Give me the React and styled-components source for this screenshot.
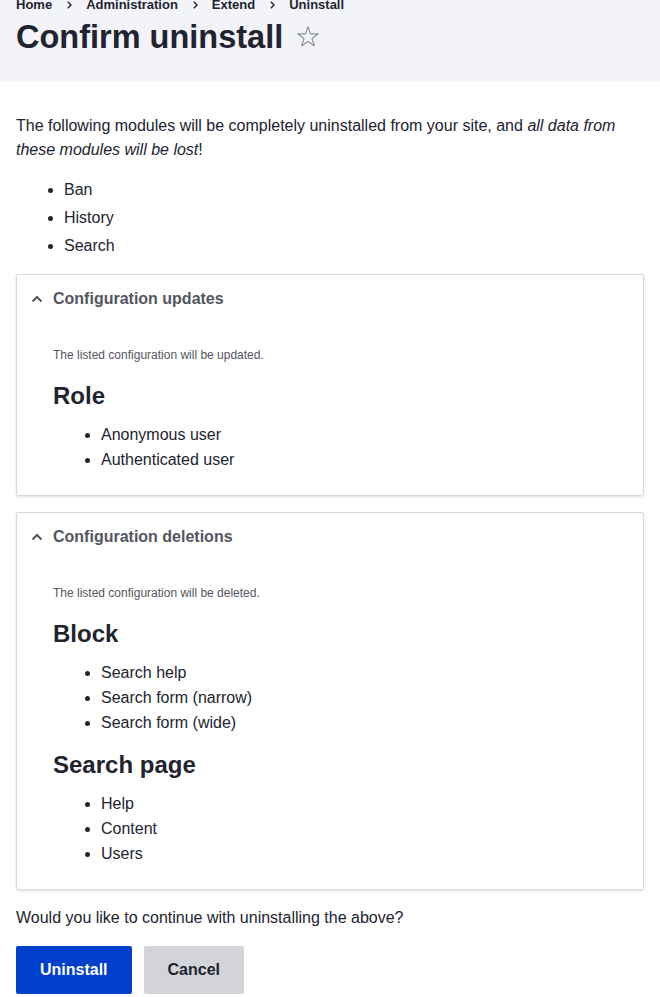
import React from 'react';
import styled, { createGlobalStyle } from 'styled-components';

const GlobalStyle = createGlobalStyle`
  html, body {
    margin: 0;
    padding: 0;
    background: #fff;
    color: #222330;
    font-family: "Liberation Sans", Arial, sans-serif;
    font-size: 16px;
  }
  * { box-sizing: border-box; }
`;

const Header = styled.header`
  background: #f3f4f9;
  margin-top: -5px;
  padding: 0 16px 24px;
`;

const Crumbs = styled.ol`
  display: flex;
  align-items: center;
  list-style: none;
  margin: 0;
  padding: 0;
  font-size: 13px;
  font-weight: bold;
  line-height: 20px;
`;

const Crumb = styled.li`
  display: flex;
  align-items: center;
  color: #222330;
`;

const Sep = styled.svg`
  margin: 0 14px 0 15px;
`;

const TitleRow = styled.div`
  display: flex;
  align-items: center;
  margin-top: 2px;
  gap: 13px;
`;

const Title = styled.h1`
  margin: 0;
  font-size: 32.5px;
  line-height: 40px;
  font-weight: bold;
  color: #222330;
`;

const Main = styled.main`
  padding: 33px 16px 0;
`;

const Lead = styled.p`
  margin: 0;
  line-height: 24px;
`;

const Bullets = styled.ul`
  margin: ${({ $tight }) => ($tight ? '13px 0 0' : '16px 0')};
  padding-left: 48px;
  line-height: ${({ $tight }) => ($tight ? '20px' : '24px')};

  li + li {
    margin-top: ${({ $tight }) => ($tight ? '5px' : '4px')};
  }
`;

const Details = styled.section`
  border: 1px solid #d8d9e0;
  border-radius: 2px;
  box-shadow: 0 1px 3px rgba(0, 0, 0, 0.12);
  margin-bottom: 16px;
`;

const Summary = styled.div`
  display: flex;
  align-items: center;
  gap: 10px;
  padding: 12px 16px 12px 14px;
  font-weight: bold;
  line-height: 24px;
  color: #545560;
`;

const Body = styled.div`
  padding: 23px 16px 25px 36px;
`;

const Note = styled.p`
  margin: 0;
  font-size: 12px;
  line-height: 18px;
  color: #545560;
`;

const Heading = styled.h2`
  margin: 16px 0 0;
  font-size: 24px;
  line-height: 32px;
  font-weight: bold;
`;

const Question = styled.p`
  margin: 0;
  line-height: 24px;
`;

const Actions = styled.div`
  display: flex;
  gap: 12px;
  margin-top: 16px;
`;

const Button = styled.button`
  height: 48px;
  padding: 0 24px;
  border: 0;
  border-radius: 2px;
  font-family: inherit;
  font-size: 16px;
  font-weight: bold;
  background: ${({ $primary }) => ($primary ? '#003ecc' : '#d3d4d9')};
  color: ${({ $primary }) => ($primary ? '#fff' : '#222330')};
`;

const Chevron = () => (
  <svg width="12" height="12" viewBox="0 0 12 12">
    <path d="M1.5 8.5 L6 4 L10.5 8.5" fill="none" stroke="#545560" strokeWidth="2" />
  </svg>
);

const Star = () => (
  <svg width="24" height="24" viewBox="0 0 25 25">
    <path
      d="M12.5 1.8 L15.1 9.2 L23 9.3 L16.7 14.1 L19 21.7 L12.5 17.2 L6 21.7 L8.3 14.1 L2 9.3 L9.9 9.2 Z"
      fill="none"
      stroke="#8e929c"
      strokeWidth="1.2"
      strokeLinejoin="round"
    />
  </svg>
);

const crumbs = ['Home', 'Administration', 'Extend', 'Uninstall'];

const groups = [
  {
    title: 'Configuration updates',
    note: 'The listed configuration will be updated.',
    sections: [{ name: 'Role', items: ['Anonymous user', 'Authenticated user'] }],
  },
  {
    title: 'Configuration deletions',
    note: 'The listed configuration will be deleted.',
    sections: [
      { name: 'Block', items: ['Search help', 'Search form (narrow)', 'Search form (wide)'] },
      { name: 'Search page', items: ['Help', 'Content', 'Users'] },
    ],
  },
];

export default function App() {
  return (
    <>
      <GlobalStyle />
      <Header>
        <Crumbs>
          {crumbs.map((c, i) => (
            <Crumb key={c}>
              {i > 0 && (
                <Sep width="5" height="8" viewBox="0 0 5 8">
                  <path d="M0.8 0.8 L4 4 L0.8 7.2" fill="none" stroke="#222330" strokeWidth="1.4" />
                </Sep>
              )}
              {c}
            </Crumb>
          ))}
        </Crumbs>
        <TitleRow>
          <Title>Confirm uninstall</Title>
          <Star />
        </TitleRow>
      </Header>
      <Main>
        <Lead>
          The following modules will be completely uninstalled from your site, and{' '}
          <em>all data from these modules will be lost</em>!
        </Lead>
        <Bullets>
          <li>Ban</li>
          <li>History</li>
          <li>Search</li>
        </Bullets>
        {groups.map((g) => (
          <Details key={g.title}>
            <Summary>
              <Chevron />
              {g.title}
            </Summary>
            <Body>
              <Note>{g.note}</Note>
              {g.sections.map((s) => (
                <React.Fragment key={s.name}>
                  <Heading>{s.name}</Heading>
                  <Bullets $tight>
                    {s.items.map((it) => (
                      <li key={it}>{it}</li>
                    ))}
                  </Bullets>
                </React.Fragment>
              ))}
            </Body>
          </Details>
        ))}
        <Question>Would you like to continue with uninstalling the above?</Question>
        <Actions>
          <Button $primary>Uninstall</Button>
          <Button>Cancel</Button>
        </Actions>
      </Main>
    </>
  );
}
